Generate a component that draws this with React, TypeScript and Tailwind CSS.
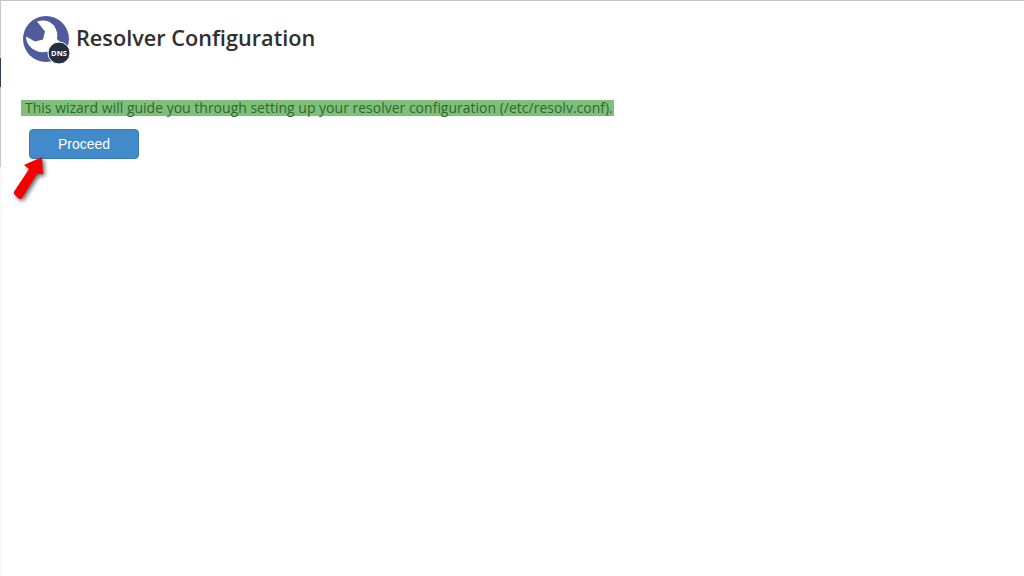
import React from 'react';

const DnsLogo = () => (
  <svg width="50" height="50" viewBox="0 0 50 50" className="shrink-0">
    <circle cx="24" cy="24" r="23" fill="#4f5b9b" />
    <path d="M15 6.5 C22 4 28 6 32 10.5 C35 15 36 20 35 24 L49 37 L41 47 L29 35 C25 37.5 19 38 14.5 36 C8 33 4 28 4 21.5 L13 26.5 L21 24.5 L23 16.5 Z" fill="#ffffff" />
    <circle cx="37" cy="38" r="11" fill="#24303f" stroke="#ffffff" strokeWidth="1" />
    <text x="37" y="41" textAnchor="middle" fontSize="7.5" fontWeight="700" fill="#ffffff" fontFamily="'Open Sans', sans-serif">DNS</text>
  </svg>
);

const RedArrow = () => (
  <svg width="40" height="54" viewBox="0 0 40 54" className="absolute left-[10px] top-[150px] drop-shadow-[2px_2px_2px_rgba(0,0,0,0.6)]">
    <path d="M32 6 L14 14 L19 18 L4.5 40 Q3 42 5 44 L8 47 Q10 49 12 47 L27 23 L33 23 Z" fill="#f40000" />
  </svg>
);

export default function App() {
  return (
    <div className="relative flex w-[1024px] h-[576px] overflow-hidden bg-white font-['Open_Sans',sans-serif] border-t border-[#c4c4c4]">
      <div className="flex w-[2px] shrink-0 flex-col">
        <div className="h-[57px] border-l border-[#c8c8c8]" />
        <div className="h-[29px] border-l border-[#2c3e50]" />
        <div className="h-[80px] border-l border-[#c8c8c8]" />
        <div className="flex-1 bg-[#f8f8f8]" />
      </div>

      <div className="flex-1 pl-[20px] pt-[14px]">
        <div className="flex items-center gap-[4px]">
          <DnsLogo />
          <h1 className="text-[21.7px] leading-[30px] font-semibold text-[#2f2f2f] mb-[4px]">Resolver Configuration</h1>
        </div>
        <p className="mt-[35px] -ml-[1px] text-[14px] leading-[16px] text-[#2d6a2d]">
          <span className="inline-block bg-[#7fbf7b] pl-[4px] pr-[1px]">This wizard will guide you through setting up your resolver configuration (/etc/resolv.conf).</span>
        </p>
        <button className="mt-[13px] ml-[7px] block w-[110px] h-[30px] rounded-[4px] bg-[#428bca] border border-[#357ebd] text-white text-[14px] font-['Liberation_Sans',sans-serif]">
          Proceed
        </button>
      </div>

      <RedArrow />
    </div>
  );
}
